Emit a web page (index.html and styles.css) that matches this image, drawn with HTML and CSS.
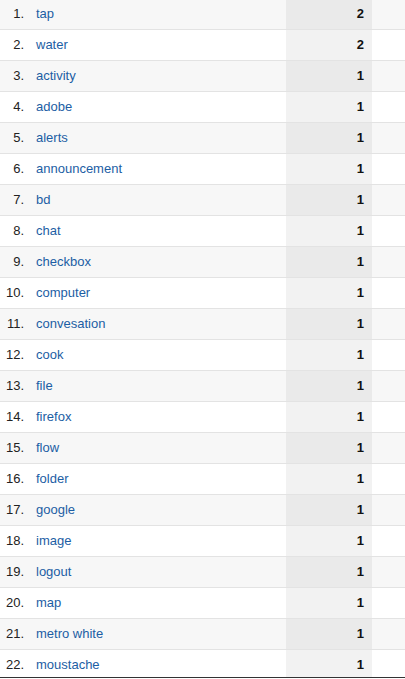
FILE: index.html
```html
<!DOCTYPE html>
<html>
<head>
<meta charset="utf-8">
<link rel="stylesheet" href="styles.css">
</head>
<body>
<div class="table">
  <div class="row"><span class="idx">1.</span><a class="name">tap</a><span class="val">2</span><span class="rest"></span></div>
  <div class="row"><span class="idx">2.</span><a class="name">water</a><span class="val">2</span><span class="rest"></span></div>
  <div class="row"><span class="idx">3.</span><a class="name">activity</a><span class="val">1</span><span class="rest"></span></div>
  <div class="row"><span class="idx">4.</span><a class="name">adobe</a><span class="val">1</span><span class="rest"></span></div>
  <div class="row"><span class="idx">5.</span><a class="name">alerts</a><span class="val">1</span><span class="rest"></span></div>
  <div class="row"><span class="idx">6.</span><a class="name">announcement</a><span class="val">1</span><span class="rest"></span></div>
  <div class="row"><span class="idx">7.</span><a class="name">bd</a><span class="val">1</span><span class="rest"></span></div>
  <div class="row"><span class="idx">8.</span><a class="name">chat</a><span class="val">1</span><span class="rest"></span></div>
  <div class="row"><span class="idx">9.</span><a class="name">checkbox</a><span class="val">1</span><span class="rest"></span></div>
  <div class="row"><span class="idx">10.</span><a class="name">computer</a><span class="val">1</span><span class="rest"></span></div>
  <div class="row"><span class="idx">11.</span><a class="name">convesation</a><span class="val">1</span><span class="rest"></span></div>
  <div class="row"><span class="idx">12.</span><a class="name">cook</a><span class="val">1</span><span class="rest"></span></div>
  <div class="row"><span class="idx">13.</span><a class="name">file</a><span class="val">1</span><span class="rest"></span></div>
  <div class="row"><span class="idx">14.</span><a class="name">firefox</a><span class="val">1</span><span class="rest"></span></div>
  <div class="row"><span class="idx">15.</span><a class="name">flow</a><span class="val">1</span><span class="rest"></span></div>
  <div class="row"><span class="idx">16.</span><a class="name">folder</a><span class="val">1</span><span class="rest"></span></div>
  <div class="row"><span class="idx">17.</span><a class="name">google</a><span class="val">1</span><span class="rest"></span></div>
  <div class="row"><span class="idx">18.</span><a class="name">image</a><span class="val">1</span><span class="rest"></span></div>
  <div class="row"><span class="idx">19.</span><a class="name">logout</a><span class="val">1</span><span class="rest"></span></div>
  <div class="row"><span class="idx">20.</span><a class="name">map</a><span class="val">1</span><span class="rest"></span></div>
  <div class="row"><span class="idx">21.</span><a class="name">metro white</a><span class="val">1</span><span class="rest"></span></div>
  <div class="row last"><span class="idx">22.</span><a class="name">moustache</a><span class="val">1</span><span class="rest"></span></div>
</div>
</body>
</html>
```
FILE: styles.css
```css
html, body {
  margin: 0;
  padding: 0;
  background: #ffffff;
}
body {
  font-family: "Liberation Sans", Arial, sans-serif;
  font-size: 13px;
  color: #222;
}
.table {
  margin-top: -1px;
  width: 405px;
}
.row {
  display: flex;
  height: 30px;
  line-height: 30px;
  border-bottom: 1px solid #e3e3e3;
  background: #ffffff;
}
.row:nth-child(odd) {
  background: #f7f7f7;
}
.idx {
  width: 24px;
  text-align: right;
  color: #222;
  flex: none;
}
.name {
  margin-left: 12px;
  flex: 1;
  color: #1c5ea4;
  text-decoration: none;
}
.val {
  width: 78px;
  padding-right: 8px;
  text-align: right;
  font-weight: bold;
  color: #111;
  background: #f2f2f2;
  flex: none;
}
.row:nth-child(odd) .val {
  background: #eaeaea;
}
.rest {
  width: 33px;
  flex: none;
}
.row.last {
  height: 27px;
  overflow: hidden;
  border-bottom: 1px solid #333;
}
```
